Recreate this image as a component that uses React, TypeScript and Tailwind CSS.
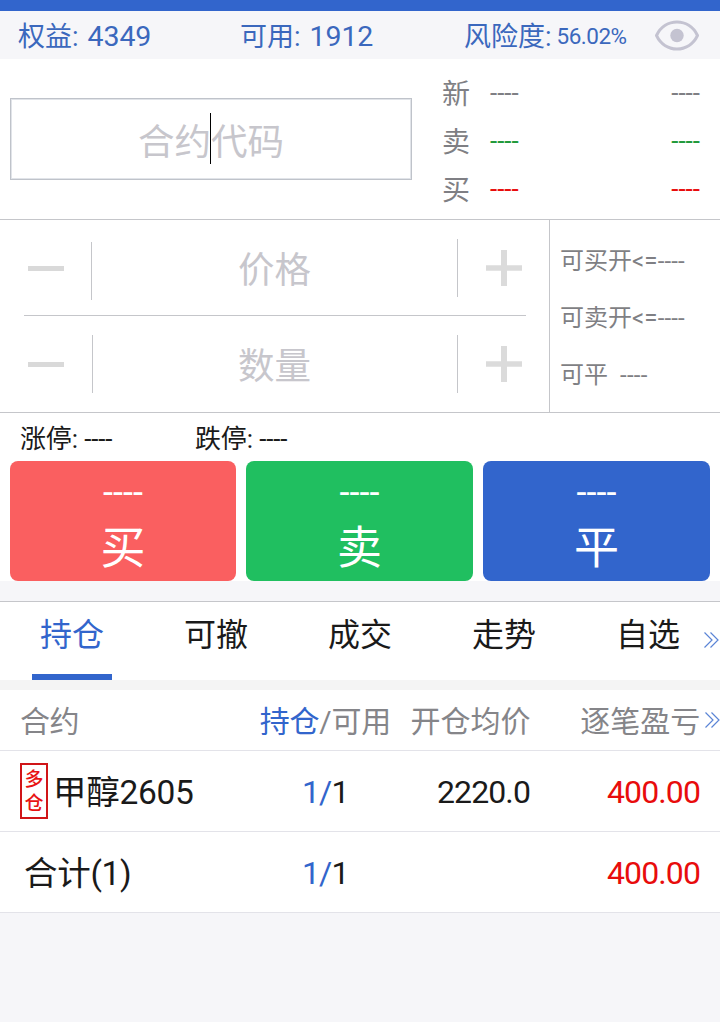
import { useState } from 'react';
import clsx from 'clsx';

type Quote = {
  label: string;
  price: string;
  volume: string;
  color: string;
};

type Row = {
  name: string;
  side?: string[];
  held: string;
  available: string;
  avgPrice?: string;
  profit: string;
};

const quotes: Quote[] = [
  { label: '新', price: '----', volume: '----', color: 'text-[#7f7f84]' },
  { label: '卖', price: '----', volume: '----', color: 'text-[#1f9a3c]' },
  { label: '买', price: '----', volume: '----', color: 'text-[#e80c0c]' },
];

const actions = [
  { label: '买', price: '----', color: 'bg-[#fa5f60]' },
  { label: '卖', price: '----', color: 'bg-[#20bf60]' },
  { label: '平', price: '----', color: 'bg-[#3265cc]' },
];

const tabs = ['持仓', '可撤', '成交', '走势', '自选'];

const rows: Row[] = [
  { name: '甲醇2605', side: ['多', '仓'], held: '1', available: '1', avgPrice: '2220.0', profit: '400.00' },
  { name: '合计(1)', held: '1', available: '1', profit: '400.00' },
];

function EyeIcon() {
  return (
    <svg viewBox="0 0 44 31" className="h-[31px] w-11" fill="none">
      <path d="M1.5 15.5C10 -2.5 34 -2.5 42.5 15.5C34 33.5 10 33.5 1.5 15.5Z" stroke="#c4c3d1" strokeWidth="3" strokeLinejoin="round" />
      <circle cx="22" cy="15.5" r="6.7" fill="#c4c3d1" />
    </svg>
  );
}

function MoreIcon() {
  return (
    <svg viewBox="0 0 15 16" className="h-4 w-[15px]" fill="none" stroke="#5b85d6" strokeWidth="1.2">
      <path d="M0.5 0.5L8 8L0.5 15.5M6.5 0.5L14 8L6.5 15.5" />
    </svg>
  );
}

function AccountBar() {
  return (
    <header className="flex h-12 items-center bg-[#f6f6f9] pr-[21px] pl-[18px] text-[27px] text-[#3b68bd]">
      <div className="flex w-[222px] items-baseline pt-1">
        权益:<span className="ml-[9px] text-[28.5px] tracking-[-0.1px]">4349</span>
      </div>
      <div className="flex w-[224px] items-baseline pt-1">
        可用:<span className="ml-[9px] text-[28.5px] tracking-[-0.1px]">1912</span>
      </div>
      <div className="flex flex-1 items-baseline pt-[5px]">
        风险度:<span className="relative -top-0.5 ml-[5px] text-[22.5px] tracking-[-0.5px]">56.02%</span>
      </div>
      <EyeIcon />
    </header>
  );
}

function Stepper({ label, dividerClass }: { label: string; dividerClass?: string }) {
  return (
    <div className="flex h-24 items-center">
      <button className="flex w-[91px] justify-start pl-7">
        <span className="h-[5px] w-9 bg-[#d9d9d9]" />
      </button>
      <span className={clsx('h-[58px] w-px bg-[#c5c6ca]', dividerClass)} />
      <div className="flex-1 pt-[7px] text-center text-[36.5px] text-[#c7c6cc]">{label}</div>
      <span className="h-[58px] w-px bg-[#c5c6ca]" />
      <button className="flex w-[91px] justify-start pl-7">
        <svg viewBox="0 0 36 36" className="size-9" fill="#dbdbdb">
          <path d="M15 0h6v15.3h15v5.4H21V36h-6V20.7H0v-5.4h15z" />
        </svg>
      </button>
    </div>
  );
}

function OrderForm() {
  return (
    <section>
      <div className="flex h-[161px] border-b border-[#c5c6ca]">
        <div className="pt-[39px] pl-2.5">
          <div className="relative flex h-[82px] w-[402px] items-center justify-center border border-[#bfc3ca] pt-2 text-[36.5px] text-[#c7c6cc] shadow-[inset_0_0_0_1px_#e1e4e9]">
            合约代码
            <span className="absolute top-3.5 left-[199px] h-[51px] w-px bg-black" />
          </div>
        </div>
        <div className="flex-1 pt-2.5 pr-5 pl-[30px]">
          {quotes.map((quote) => (
            <div key={quote.label} className="flex h-12 items-center">
              <span className="w-12 pt-[3px] text-[28px] text-[#7f7f84]">{quote.label}</span>
              <span className={clsx('flex-1 pt-px text-[26px]', quote.color)}>{quote.price}</span>
              <span className={clsx('pt-px text-[26px]', quote.color)}>{quote.volume}</span>
            </div>
          ))}
        </div>
      </div>

      <div className="flex h-[193px] border-b border-[#c5c6ca]">
        <div className="w-[549px]">
          <Stepper label="价格" dividerClass="relative top-[3px]" />
          <div className="mr-[23px] ml-6 -mt-px h-px bg-[#c5c6ca]" />
          <Stepper label="数量" dividerClass="relative left-px" />
        </div>
        <div className="flex flex-1 flex-col border-l border-[#c5c6ca] pt-[11px] pl-2.5 text-2xl text-[#7f7f84]">
          <div className="flex h-[57px] items-center pt-0.5">
            可买开<span className="tracking-[0.15px]">&lt;=----</span>
          </div>
          <div className="flex h-[57px] items-center pt-0.5">
            可卖开<span className="tracking-[0.15px]">&lt;=----</span>
          </div>
          <div className="flex h-[57px] items-center gap-3 pt-0.5">
            可平 <span className="tracking-[0.3px]">----</span>
          </div>
        </div>
      </div>

      <div className="flex h-12 items-center pt-1 pl-5 text-[26px] text-[#1a1a1a]">
        <span className="w-[175px] tracking-[-0.15px]">涨停: ----</span>
        <span className="tracking-[-0.15px]">跌停: ----</span>
      </div>

      <div className="grid grid-cols-[226px_227px_227px] gap-2.5 px-2.5">
        {actions.map((action) => (
          <button key={action.label} className={clsx('flex h-[120px] flex-col items-center rounded-lg text-white', action.color)}>
            <span className="h-[60px] pt-0.5 text-4xl leading-[60px]">{action.price}</span>
            <span className="pt-px text-[45px] leading-[54px]">{action.label}</span>
          </button>
        ))}
      </div>
    </section>
  );
}

function PositionTable() {
  return (
    <section className="bg-white text-[#1a1a1a]">
      <div className="flex h-[61px] items-center border-b border-[#e3e3e9] pl-5 text-[30px] text-[#858589]">
        <span className="w-60 pt-0.5 tracking-[-0.4px]">合约</span>
        <span className="w-[150px] pt-0.5 tracking-[-0.2px]">
          <span className="text-[#3265cc]">持仓</span>/可用
        </span>
        <span className="w-[170px] pt-0.5 pl-px">开仓均价</span>
        <span className="w-[126px] pt-0.5 pl-px">逐笔盈亏</span>
        <MoreIcon />
      </div>

      {rows.map((row) => (
        <div key={row.name} className="flex h-[81px] items-center border-b border-[#e3e3e9] pr-5 text-[32px] tracking-[-0.9px]">
          <div className={clsx('flex w-[302px] items-center text-[33.5px] tracking-[-0.3px]', row.side ? 'pl-5' : 'pl-6')}>
            {row.side ? (
              <span className="mr-[5px] flex h-14 w-7 flex-col items-center justify-center border-2 border-[#d01518] text-[19px] leading-6 font-medium tracking-normal text-[#e81313]">
                {row.side.map((char) => (
                  <span key={char} className="relative top-px">
                    {char}
                  </span>
                ))}
              </span>
            ) : null}
            <span className="pt-[5px]">{row.name}</span>
          </div>
          <div className="w-[61px] pt-px">
            <span className="text-[#3265cc]">{row.held}/</span>
            {row.available}
          </div>
          <div className="w-[167px] pt-px text-right">{row.avgPrice}</div>
          <div className="flex-1 pt-px text-right text-[#e80c0c]">{row.profit}</div>
        </div>
      ))}
    </section>
  );
}

export default function App() {
  const [activeTab, setActiveTab] = useState('持仓');

  return (
    <main className="h-[1022px] w-[720px] overflow-hidden bg-[#f6f6f9] font-[Roboto,'Noto_Sans_CJK_SC',sans-serif] whitespace-nowrap">
      <div className="h-[11px] bg-[#3265cc]" />
      <AccountBar />
      <div className="bg-white">
        <OrderForm />
      </div>

      <nav className="relative mt-5 flex h-[79px] border-t border-[#c5c6ca] bg-white">
        {tabs.map((tab) => (
          <button
            key={tab}
            onClick={() => setActiveTab(tab)}
            className={clsx('flex flex-1 flex-col items-center justify-between text-[32px]', tab === activeTab ? 'text-[#3265cc]' : 'text-[#1a1a1a]')}
          >
            <span className="leading-[66px]">{tab}</span>
            {tab === activeTab ? <span className="h-1.5 w-20 bg-[#3265cc]" /> : null}
          </button>
        ))}
        <span className="absolute top-[30px] right-px">
          <MoreIcon />
        </span>
      </nav>

      <div className="h-2.5 bg-[#f4f4f4]" />
      <PositionTable />
    </main>
  );
}
